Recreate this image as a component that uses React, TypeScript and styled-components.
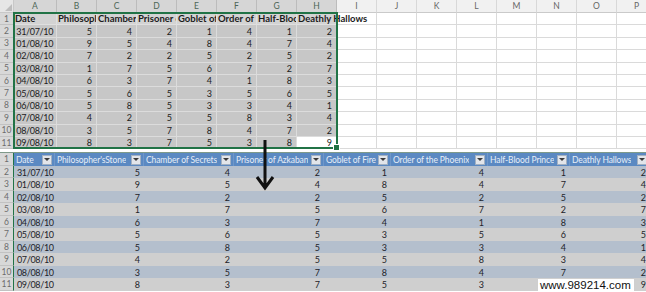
import { Fragment } from "react";
import styled, { createGlobalStyle } from "styled-components";

const GREEN = "#217346";

const GlobalStyle = createGlobalStyle`
  html, body { margin: 0; padding: 0; background: #fff; }
  body { font-family: "Lato", "Open Sans", sans-serif; }
`;

const titles = [
  "Date",
  "Philosopher'sStone",
  "Chamber of Secrets",
  "Prisoner of Azkaban",
  "Goblet of Fire",
  "Order of the Phoenix",
  "Half-Blood Prince",
  "Deathly Hallows",
];

const data: [string, ...number[]][] = [
  ["31/07/10", 5, 4, 2, 1, 4, 1, 2],
  ["01/08/10", 9, 5, 4, 8, 4, 7, 4],
  ["02/08/10", 7, 2, 2, 5, 2, 5, 2],
  ["03/08/10", 1, 7, 5, 6, 7, 2, 7],
  ["04/08/10", 6, 3, 7, 4, 1, 8, 3],
  ["05/08/10", 5, 6, 5, 3, 5, 6, 5],
  ["06/08/10", 5, 8, 5, 3, 3, 4, 1],
  ["07/08/10", 4, 2, 5, 5, 8, 3, 4],
  ["08/08/10", 3, 5, 7, 8, 4, 7, 2],
  ["09/08/10", 8, 3, 7, 5, 3, 8, 9],
];

const letters = "ABCDEFGHIJKLMNOP".split("");

const Page = styled.div`
  position: relative;
  width: 646px;
  height: 292px;
  overflow: hidden;
  display: flex;
  flex-direction: column;
  color: #1c1c1c;
`;

/* ---------- top: plain range ---------- */

const TopSheet = styled.div`
  position: relative;
  display: grid;
  grid-template-columns: 14px 43px repeat(15, 40px);
  grid-template-rows: 13px repeat(11, 12.4px);
  flex: none;
  font-size: 9px;
`;

const Corner = styled.div`
  box-sizing: border-box;
  background: #e6e6e6;
  border-right: 1px solid #c8c8c8;
  border-bottom: 1px solid #c8c8c8;
  display: flex;
  align-items: flex-end;
  justify-content: flex-end;
  padding: 1px;

  &::after {
    content: "";
    border-left: 7px solid transparent;
    border-bottom: 7px solid #bdbdbd;
  }
`;

const ColHead = styled.div<{ $selected?: boolean }>`
  box-sizing: border-box;
  display: flex;
  align-items: center;
  justify-content: center;
  font-size: 8.5px;
  color: ${(p) => (p.$selected ? "#4c6656" : "#666")};
  background: ${(p) => (p.$selected ? "#d6d6d6" : "#f1f1f1")};
  border-right: 1px solid ${(p) => (p.$selected ? "#bcbcbc" : "#d8d8d8")};
  border-bottom: ${(p) => (p.$selected ? `1px solid ${GREEN}` : "1px solid #cacaca")};
`;

const RowHead = styled.div`
  box-sizing: border-box;
  display: flex;
  align-items: center;
  justify-content: center;
  font-size: 8.5px;
  color: #6c6c6c;
  background: #d8d8d8;
  border-bottom: 1px solid #c2c2c2;
  border-right: 1px solid ${GREEN};
`;

type Tone = "title" | "sel" | "blank" | "active";

const tones: Record<Tone, { bg: string; line: string }> = {
  title: { bg: "#d3d3d3", line: "#dfdfdf" },
  sel: { bg: "#c7c7c7", line: "#dcdcdc" },
  blank: { bg: "#ffffff", line: "#dadada" },
  active: { bg: "#ffffff", line: "#dadada" },
};

const Cell = styled.div<{ $tone: Tone; $left?: boolean; $spill?: boolean; $date?: boolean }>`
  box-sizing: border-box;
  display: flex;
  align-items: center;
  justify-content: ${(p) => (p.$left ? "flex-start" : "flex-end")};
  padding: ${(p) => (p.$left ? "0 0 0 1px" : p.$date ? "0 3px 0 0" : "0 4px 0 0")};
  background: ${(p) => tones[p.$tone].bg};
  border-right: 1px solid ${(p) => tones[p.$tone].line};
  border-bottom: 1px solid ${(p) => tones[p.$tone].line};
  font-weight: ${(p) => (p.$tone === "title" ? 700 : 400)};
  font-size: ${(p) => (p.$tone === "title" ? "9.5px" : "9px")};
  letter-spacing: ${(p) => (p.$date ? "-0.35px" : "0")};
  white-space: nowrap;
  overflow: ${(p) => (p.$spill ? "visible" : "hidden")};
  position: ${(p) => (p.$spill ? "relative" : "static")};
  z-index: ${(p) => (p.$spill ? 1 : "auto")};
`;

/* selection outline drawn over A1:H11 */
const SelectionFrame = styled.div`
  position: absolute;
  left: 13px;
  top: 12px;
  width: 325px;
  height: 137.4px;
  box-sizing: border-box;
  border: 2px solid ${GREEN};
  z-index: 2;
  pointer-events: none;

  &::after {
    content: "";
    position: absolute;
    right: -4px;
    bottom: -4px;
    width: 5px;
    height: 5px;
    background: ${GREEN};
    border: 1px solid #fff;
  }
`;

const Divider = styled.div`
  flex: none;
  height: 3px;
  background: #fff;
  border-bottom: 1px solid #7f9a8a;
`;

/* ---------- bottom: formatted table ---------- */

const BottomSheet = styled.div`
  display: grid;
  grid-template-columns: 14px 41px 89px 90px 90px 67px 97px 82px 80px;
  grid-template-rows: repeat(11, 12.5px);
  flex: none;
  font-size: 9px;
`;

const TableHead = styled.div`
  box-sizing: border-box;
  display: flex;
  align-items: center;
  justify-content: space-between;
  gap: 1px;
  padding: 0 2px;
  background: #5b89c2;
  color: #e6eef8;
  white-space: nowrap;
  overflow: hidden;
  border-right: 1px solid #6f97c9;
  font-size: 8.5px;
  letter-spacing: -0.1px;
`;

const HeadText = styled.span`
  overflow: hidden;
`;

const Filter = styled.span`
  flex: none;
  box-sizing: border-box;
  width: 10px;
  height: 10px;
  background: #e2e5ea;
  border: 1px solid #a3b1c2;
  display: flex;
  align-items: center;
  justify-content: center;

  &::after {
    content: "";
    border-left: 3px solid transparent;
    border-right: 3px solid transparent;
    border-top: 3px solid #3b3b3b;
  }
`;

const Band = styled.div<{ $alt: boolean; $date?: boolean }>`
  box-sizing: border-box;
  display: flex;
  align-items: center;
  justify-content: ${(p) => (p.$date ? "flex-start" : "flex-end")};
  padding: ${(p) => (p.$date ? "0 0 0 3px" : "0 4px 0 0")};
  letter-spacing: ${(p) => (p.$date ? "-0.35px" : "0")};
  background: ${(p) => (p.$alt ? "#cfcfcf" : "#b4bfcd")};
  color: #1e2329;
  white-space: nowrap;
  overflow: hidden;
`;

/* ---------- overlays ---------- */

const Arrow = styled.svg`
  position: absolute;
  left: 255px;
  top: 139px;
  z-index: 5;
`;

const Watermark = styled.div`
  position: absolute;
  left: 538px;
  bottom: 0;
  padding: 0 3px 1px 2px;
  background: #fff;
  font-family: "Liberation Sans", Arial, sans-serif;
  font-size: 11.5px;
  color: #111;
  z-index: 5;
`;

function TopRange() {
  return (
    <TopSheet>
      <Corner />
      {letters.map((l, i) => (
        <ColHead key={l} $selected={i < 8}>
          {l}
        </ColHead>
      ))}

      <RowHead>1</RowHead>
      {letters.map((l, i) => {
        if (i > 7) return <Cell key={l} $tone="blank" />;
        const title = titles[i].replace("'sStone", "'s Stone");
        return (
          <Cell key={l} $tone="title" $left $spill={i === 7}>
            {title}
          </Cell>
        );
      })}

      {data.map((row, r) => (
        <Fragment key={row[0]}>
          <RowHead>{r + 2}</RowHead>
          {letters.map((l, i) => {
            if (i > 7) return <Cell key={l} $tone="blank" />;
            const active = r === data.length - 1 && i === 7;
            return (
              <Cell key={l} $tone={active ? "active" : "sel"} $date={i === 0}>
                {row[i]}
              </Cell>
            );
          })}
        </Fragment>
      ))}

      <SelectionFrame />
    </TopSheet>
  );
}

function BottomTable() {
  return (
    <BottomSheet>
      <RowHead>1</RowHead>
      {titles.map((t) => (
        <TableHead key={t}>
          <HeadText>{t}</HeadText>
          <Filter />
        </TableHead>
      ))}
      {data.map((row, r) => (
        <Fragment key={row[0]}>
          <RowHead>{r + 2}</RowHead>
          {row.map((v, i) => (
            <Band key={i} $alt={r % 2 === 1} $date={i === 0}>
              {v}
            </Band>
          ))}
        </Fragment>
      ))}
    </BottomSheet>
  );
}

export default function App() {
  return (
    <>
      <GlobalStyle />
      <Page>
        <TopRange />
        <Divider />
        <BottomTable />

        <Arrow width="20" height="52" viewBox="0 0 20 52">
          <path
            d="M10 1 V49 M2 38 L10 49 L18 38"
            fill="none"
            stroke="#111"
            strokeWidth="3"
          />
        </Arrow>

        <Watermark>www.989214.com</Watermark>
      </Page>
    </>
  );
}
